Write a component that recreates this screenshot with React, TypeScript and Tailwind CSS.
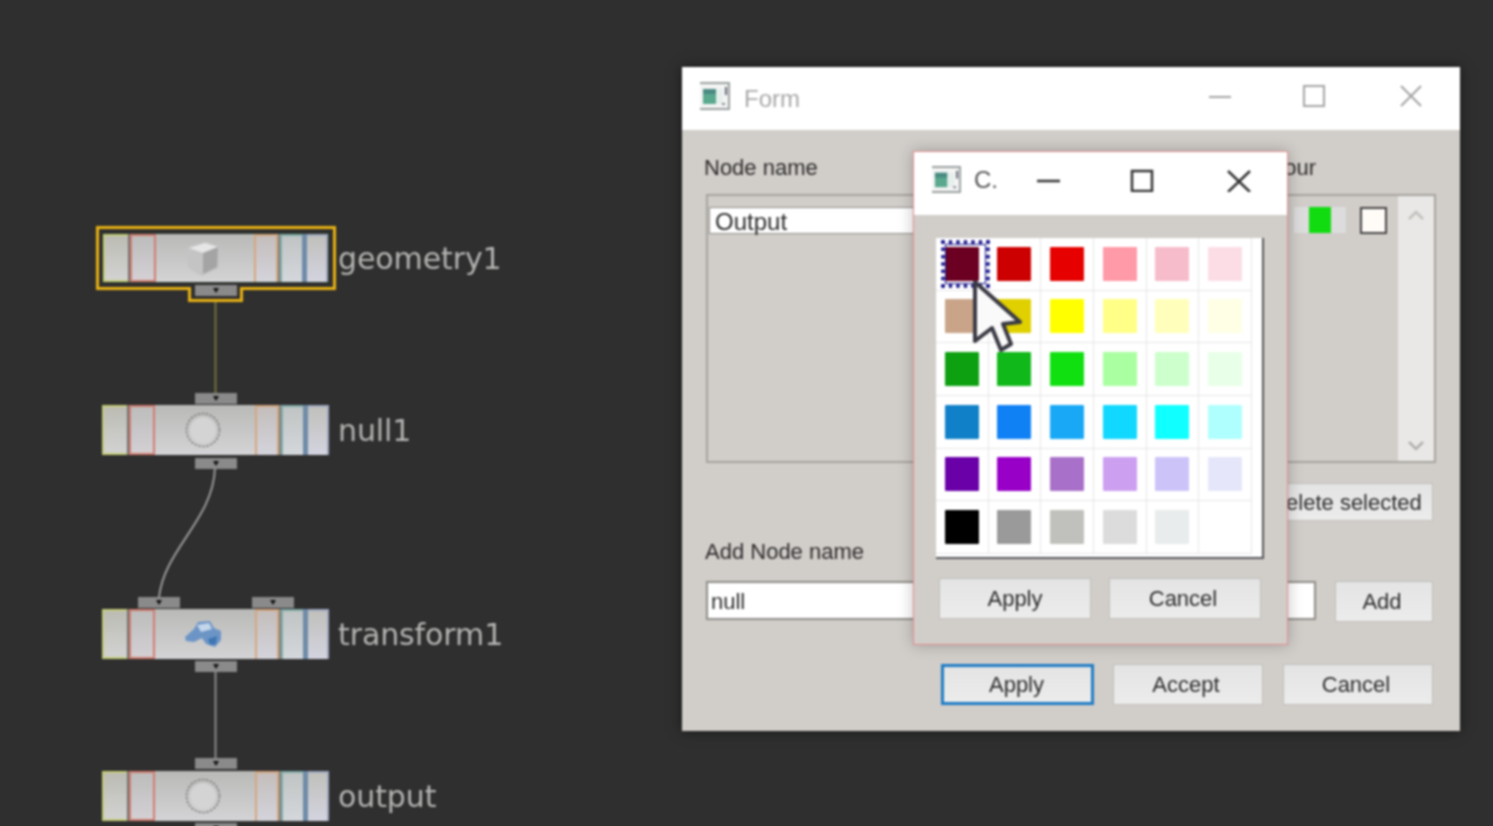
import React from "react";

const SWATCHES = [
  ["#6b0022", "#cc0000", "#e60000", "#ff9aa8", "#f7bccb", "#fcdde6"],
  ["#c9a488", "#e0d000", "#ffff00", "#ffff88", "#ffffbb", "#ffffe6"],
  ["#0da010", "#10b81a", "#10e010", "#aaffa0", "#ccffcc", "#e8ffe8"],
  ["#1080c8", "#1080f5", "#18a8f5", "#10d8ff", "#10ffff", "#b0ffff"],
  ["#6a00a8", "#9800c8", "#a870c8", "#cc9ff0", "#ccc4f8", "#e6e6fb"],
  ["#000000", "#9a9a9a", "#c0c0bc", "#dcdcdc", "#e8ecec", "#ffffff"],
];

function Tab({ className = "" }: { className?: string }) {
  return (
    <div className={`absolute w-[42px] h-[11px] bg-[#8a8a8a] flex items-center justify-center ${className}`}>
      <svg width="6" height="5" viewBox="0 0 6 5"><path d="M0 0H6L3 5Z" fill="#111" /></svg>
    </div>
  );
}

function Stripe({ w, c, bars }: { w: string; c: string; bars: string }) {
  return <div className={`h-full shrink-0 ${w} ${c} ${bars}`} />;
}

function Cube() {
  return (
    <svg width="36" height="36" viewBox="0 0 36 36">
      <path d="M2 9 Q2 7 5 6 L19 2 Q21 1.500 23 2 L33 6 Q35 7 35 9 L34 26 Q34 28 32 29 L19 35 Q17 36 15 35 L5 29 Q3 28 3 26 Z" fill="#c4c4c4" />
      <path d="M4 8 L20 3 L33 7 L18 13 Z" fill="#e6e6e6" />
      <path d="M18 13 L33 7 L32 27 L18 34 Z" fill="#a4a4a4" />
    </svg>
  );
}

function NullIcon() {
  return (
    <svg width="36" height="36" viewBox="0 0 36 36">
      <circle cx="18" cy="18" r="16.500" fill="none" stroke="#7c7c7c" strokeWidth="1.500" strokeDasharray="2.500 1.500" />
      <circle cx="18" cy="18" r="13" fill="#d4d4d4" />
    </svg>
  );
}

function TransformIcon() {
  return (
    <svg width="38" height="28" viewBox="0 0 38 28">
      <path d="M1 17 L10 9 L14 2 L26 1 L30 8 L37 11 L37 20 L31 27 L22 24 L18 18 L10 22 L2 21 Z" fill="#6c95c6" />
      <path d="M13 5 L25 3 L28 9 L17 12 Z" fill="#c4d6ea" />
      <path d="M24 19 L33 16 L32 24 L26 25 Z" fill="#3e76b3" />
    </svg>
  );
}

function Node({ top, label, icon, selected = false }: { top: string; label: string; icon: React.ReactNode; selected?: boolean }) {
  return (
    <div className={`absolute left-[102px] flex items-center h-[50px] ${top}`}>
      <div className={`flex w-[227px] h-[50px] items-stretch bg-gradient-to-b from-[#b9b9b7] to-[#d4d4d6] ${selected ? "border border-[#2e3a2e]" : ""}`}>
        <Stripe w="w-[25px]" c="bg-gradient-to-b from-[#bcbcb4] to-[#d2d2d2]" bars="border-t-2 border-b-2 border-l-2 border-[#c4cc78]" />
        <div className="w-[2px] bg-[#707070]" />
        <Stripe w="w-[26px]" c="bg-gradient-to-b from-[#bdbdbd] to-[#d4d0d4]" bars="border-2 border-[#d07c70]" />
        <div className="flex-1 flex items-center justify-center pr-[4px]">{icon}</div>
        <Stripe w="w-[24px]" c="bg-gradient-to-b from-[#c4bebc] to-[#d4d4dc]" bars="border-l-2 border-r-2 border-t-2 border-[#d4a680]" />
        <div className="w-[2px] bg-[#808080]" />
        <Stripe w="w-[22px]" c="bg-gradient-to-b from-[#c0c4c4] to-[#d4d8dc]" bars="border-l-2 border-t-2 border-[#80aca8]" />
        <div className="w-[5px] bg-[#6f8ba8]" />
        <Stripe w="w-[21px]" c="bg-gradient-to-b from-[#c0c0bc] to-[#d4d4e0]" bars="border-t-2 border-r-2 border-[#a0a8c0]" />
      </div>
      <span className="ml-[9px] mt-[2px] text-[30px] leading-none text-[#b4b4b2] font-['DejaVu_Sans',sans-serif] whitespace-nowrap tracking-[-0.1px]">{label}</span>
    </div>
  );
}

function AppIcon({ size, className = "" }: { size: string; className?: string }) {
  return (
    <svg className={`${size} ${className}`} viewBox="0 0 32 28">
      <path d="M1 1 H30 V27 H1" fill="#f4f4f4" stroke="#9aa0a0" strokeWidth="2" />
      <rect x="4" y="7" width="13" height="15" fill="#5aa88e" />
      <rect x="4" y="7" width="13" height="5" fill="#4a8a82" />
      <rect x="17" y="7" width="7" height="15" fill="#e6efec" />
      <rect x="26" y="5" width="2" height="8" fill="#667" />
      <rect x="23" y="21" width="3" height="2" fill="#889" />
    </svg>
  );
}

function Btn({ children, className = "" }: { children: React.ReactNode; className?: string }) {
  return (
    <div className={`flex items-center justify-center border border-[#c0c0bc] bg-gradient-to-b from-[#e4e4e4] to-[#ececec] text-[22px] text-[#2c2c2c] ${className}`}>
      {children}
    </div>
  );
}

function Cursor() {
  return (
    <svg className="absolute left-[968px] top-[278px] z-20" width="60" height="78" viewBox="0 0 60 78">
      <path d="M7 4 L52 44 L35 46 L43 66 L33 72 L24 50 L7 63 Z" fill="#fafafa" stroke="#3a3a44" strokeWidth="4" strokeLinejoin="round" />
    </svg>
  );
}

export default function App() {
  return (
    <div className="w-[1493px] h-[826px] overflow-hidden bg-[#2f2f2f]">
      <div className="relative w-[1493px] h-[826px] blur-[0.8px] font-['Liberation_Sans',sans-serif]">
        {/* wires */}
        <svg className="absolute inset-0" width="1493" height="826" viewBox="0 0 1493 826" fill="none">
          <path d="M215.500 300V394" stroke="#77733f" strokeWidth="2" />
          <path d="M215 468C213 520 165 548 159 597" stroke="#9a9a9a" strokeWidth="2" />
          <path d="M215.500 672V759" stroke="#8c8c8c" strokeWidth="2" />
        </svg>

        {/* selection outline of geometry1 */}
        <div className="absolute left-[96px] top-[226px] w-[240px] h-[64px] border-[3px] border-[#e8b214]" />
        <div className="absolute left-[188px] top-[287px] w-[55px] h-[15px] border-[3px] border-t-0 border-[#e8b214] bg-[#2f2f2f]" />

        <Node top="top-[233px]" label="geometry1" icon={<Cube />} selected />
        <Tab className="left-[195px] top-[285px]" />
        <Tab className="left-[195px] top-[393px]" />
        <Node top="top-[405px]" label="null1" icon={<NullIcon />} />
        <Tab className="left-[195px] top-[458px]" />
        <Tab className="left-[138px] top-[597px]" />
        <Tab className="left-[252px] top-[597px]" />
        <Node top="top-[609px]" label="transform1" icon={<TransformIcon />} />
        <Tab className="left-[195px] top-[661px]" />
        <Tab className="left-[195px] top-[758px]" />
        <Node top="top-[771px]" label="output" icon={<NullIcon />} />
        <Tab className="left-[195px] top-[823px]" />

        {/* Form window */}
        <div className="absolute left-[682px] top-[67px] w-[778px] h-[664px] bg-[#d1cdc9] flex flex-col shadow-[0_0_12px_rgba(0,0,0,0.5)]">
          <div className="h-[63px] bg-white flex items-center pl-[17px] pr-[38px] shrink-0">
            <AppIcon size="w-[32px] h-[28px]" className="-mt-[6px]" />
            <span className="ml-[13px] text-[24px] text-[#a8a8a8]">Form</span>
            <svg className="ml-auto -mt-[6px]" width="213" height="24" viewBox="0 0 213 24" fill="none" stroke="#a4a4a4" strokeWidth="2">
              <path d="M0 13H22" />
              <rect x="95" y="2" width="20" height="20" />
              <path d="M192 2L212 22M212 2L192 22" />
            </svg>
          </div>

          <div className="flex-1 flex flex-col pl-[22px] pr-[24px] text-[#2c2c2c]">
            <div className="flex justify-between pt-[24px] pb-[12px] text-[22px] leading-[28px] pr-[120px]">
              <span>Node name</span>
              <span>Colour</span>
            </div>
            <div className="ml-[2px] h-[269px] border-2 border-[#a7a49f] flex">
              <div className="flex-1 pt-[10px]">
                <div className="flex items-center h-[28px] mx-[1px]">
                  <div className="w-[560px] h-[27px] bg-white border border-[#8e8c88] pl-[5px] text-[24px] leading-[27px]">Output</div>
                  <div className="ml-[25px] w-[52px] h-[26px] bg-[#dcdcdc] flex justify-center">
                    <div className="w-[22px] h-full bg-[#10dc10]" />
                  </div>
                  <div className="ml-[14px] w-[27px] h-[27px] bg-[#fffcf8] border-2 border-[#444]" />
                </div>
              </div>
              <div className="w-[36px] bg-[#e9e8e6] flex flex-col items-center justify-between pt-[14px] pb-[10px]">
                <svg width="16" height="10" viewBox="0 0 16 10" fill="none" stroke="#c0c0bc" strokeWidth="2.500"><path d="M1 9L8 2L15 9" /></svg>
                <svg width="16" height="10" viewBox="0 0 16 10" fill="none" stroke="#b0b0ac" strokeWidth="2.500"><path d="M1 1L8 8L15 1" /></svg>
              </div>
            </div>
            <div className="flex justify-end mt-[20px] mr-[3px]">
              <Btn className="w-[200px] h-[38px] pl-[26px]">Delete selected</Btn>
            </div>
            <div className="mt-[17px] ml-[1px] text-[22px] leading-[28px]">Add Node name</div>
            <div className="flex items-start mt-[15px] ml-[2px] mr-[3px]">
              <div className="w-[610px] h-[39px] bg-white border-2 border-[#8f8d89] pl-[3px] text-[22px] leading-[37px]">null</div>
              <Btn className="ml-auto w-[98px] h-[41px] pr-[4px]">Add</Btn>
            </div>
            <div className="flex justify-end mt-[42px] mr-[3px]">
              <Btn className="w-[153px] h-[41px] pr-[2px] !border-[3px] !border-[#1f7cc4]">Apply</Btn>
              <Btn className="ml-[19px] w-[150px] h-[41px] pr-[4px]">Accept</Btn>
              <Btn className="ml-[20px] w-[150px] h-[41px] pr-[4px]">Cancel</Btn>
            </div>
          </div>
        </div>

        {/* Colour dialog */}
        <div className="absolute left-[913px] top-[151px] w-[375px] h-[494px] z-10 bg-[#d1cdc9] border border-[#e08f8f] flex flex-col shadow-[0_0_14px_rgba(0,0,0,0.25)]">
          <div className="h-[63px] bg-white flex items-center pl-[17px] pr-[35px] pb-[8px] shrink-0">
            <AppIcon size="w-[31px] h-[27px]" />
            <span className="ml-[12px] text-[24px] text-[#555]">C.</span>
            <svg className="ml-auto" width="215" height="24" viewBox="0 0 215 24" fill="none" stroke="#333" strokeWidth="2.500">
              <path d="M0 13H23" />
              <rect x="95" y="3" width="20" height="20" />
              <path d="M191 3L213 24M213 3L191 24" />
            </svg>
          </div>
          <div className="flex-1 flex flex-col pl-[22px] pr-[25px] pt-[23px]">
            <div className="w-[328px] h-[321px] bg-white border-r-2 border-b-2 border-[#55555a] pr-[10px]">
              <div className="grid grid-cols-6 grid-rows-6 w-[316px] h-[316px]">
                {SWATCHES.flat().map((c, i) => (
                  <div key={i} className="relative flex items-center justify-center border-r border-b border-[#e6e6e6]">
                    {i === 0 && <div className="absolute left-[5px] top-[2px] w-[49px] h-[48px] border-[4px] border-dotted border-[#14108a] shadow-[inset_0_0_0_1px_#14108a]" />}
                    <div className="w-[34px] h-[34px] rounded-[1px]" style={{ backgroundColor: c }} />
                  </div>
                ))}
              </div>
            </div>
            <div className="flex justify-between mt-[19px] pl-[3px] pr-[1px]">
              <Btn className="w-[152px] h-[41px]">Apply</Btn>
              <Btn className="w-[152px] h-[41px] pr-[4px]">Cancel</Btn>
            </div>
          </div>
        </div>

        <Cursor />
      </div>
    </div>
  );
}
